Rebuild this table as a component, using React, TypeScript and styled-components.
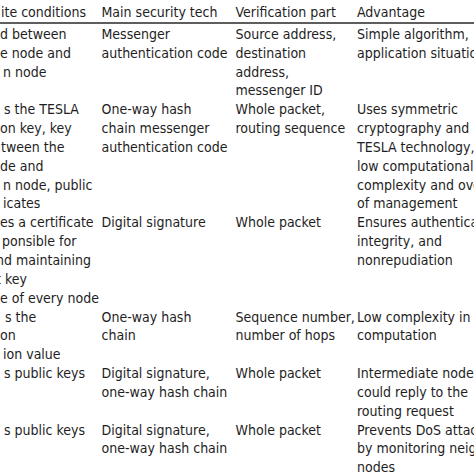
import React from 'react';
import styled, { createGlobalStyle } from 'styled-components';

const GlobalStyle = createGlobalStyle`
  html, body {
    margin: 0;
    padding: 0;
    background: #fff;
    overflow: hidden;
  }
  body {
    font-family: "DejaVu Sans Condensed", "DejaVu Sans", sans-serif;
    font-stretch: condensed;
    font-size: 14px;
    color: #1e1e1e;
  }
`;

type CellLine = string | { text: string; shift: number };

interface RowData {
  prereq: CellLine[];
  tech: string[];
  part: string[];
  advantage: string[];
}

const rows: RowData[] = [
  {
    prereq: ['d between', 'e node and', { text: 'n node', shift: 3 }],
    tech: ['Messenger', 'authentication code'],
    part: ['Source address,', 'destination', 'address,', 'messenger ID'],
    advantage: ['Simple algorithm,', 'application situation'],
  },
  {
    prereq: [
      { text: 's the TESLA', shift: 4 },
      'on key, key',
      { text: 'tween the', shift: 1 },
      'de and',
      { text: 'n node, public', shift: 3 },
      { text: 'icates', shift: 3 },
    ],
    tech: ['One-way hash', 'chain messenger', 'authentication code'],
    part: ['Whole packet,', 'routing sequence'],
    advantage: [
      'Uses symmetric',
      'cryptography and',
      'TESLA technology,',
      'low computational',
      'complexity and overhead',
      'of management',
    ],
  },
  {
    prereq: [
      'es a certificate',
      { text: 'ponsible for', shift: 2 },
      { text: 'nd maintaining', shift: -4 },
      { text: 't key', shift: -4 },
      'e of every node',
    ],
    tech: ['Digital signature'],
    part: ['Whole packet'],
    advantage: ['Ensures authentication,', 'integrity, and', 'nonrepudiation'],
  },
  {
    prereq: [{ text: 's the', shift: 5 }, 'on', { text: 'ion value', shift: 3 }],
    tech: ['One-way hash', 'chain'],
    part: ['Sequence number,', 'number of hops'],
    advantage: ['Low complexity in', 'computation'],
  },
  {
    prereq: [{ text: 's public keys', shift: 4 }],
    tech: ['Digital signature,', 'one-way hash chain'],
    part: ['Whole packet'],
    advantage: ['Intermediate nodes', 'could reply to the', 'routing request'],
  },
  {
    prereq: [{ text: 's public keys', shift: 4 }],
    tech: ['Digital signature,', 'one-way hash chain'],
    part: ['Whole packet'],
    advantage: ['Prevents DoS attacks', 'by monitoring neighbor', 'nodes'],
  },
];

const Sheet = styled.div`
  width: 474px;
  height: 474px;
  overflow: hidden;
`;

const Row = styled.div<{ $head?: boolean }>`
  display: grid;
  grid-template-columns: 101.5px 134px 121.5px 1fr;
  line-height: 18.85px;
  padding-top: ${p => (p.$head ? '3px' : '0')};
  border-bottom: ${p => (p.$head ? '2px solid #5e5e5e' : 'none')};
  margin-bottom: ${p => (p.$head ? '1px' : '0')};
`;

const Cell = styled.div`
  min-width: 0;
  white-space: nowrap;
`;

const FirstCell = styled(Cell)`
  overflow: hidden;
`;

const Line = styled.span<{ $shift?: number }>`
  display: block;
  margin-left: ${p => p.$shift ?? 0}px;
`;

const renderLines = (lines: CellLine[]) =>
  lines.map((l, i) =>
    typeof l === 'string' ? (
      <Line key={i}>{l}</Line>
    ) : (
      <Line key={i} $shift={l.shift}>
        {l.text}
      </Line>
    )
  );

export default function App() {
  return (
    <>
      <GlobalStyle />
      <Sheet>
        <Row $head>
          <FirstCell>
            <Line $shift={1}>ite conditions</Line>
          </FirstCell>
          <Cell>Main security tech</Cell>
          <Cell>Verification part</Cell>
          <Cell>Advantage</Cell>
        </Row>
        {rows.map((r, i) => (
          <Row key={i}>
            <FirstCell>{renderLines(r.prereq)}</FirstCell>
            <Cell>{renderLines(r.tech)}</Cell>
            <Cell>{renderLines(r.part)}</Cell>
            <Cell>{renderLines(r.advantage)}</Cell>
          </Row>
        ))}
      </Sheet>
    </>
  );
}
